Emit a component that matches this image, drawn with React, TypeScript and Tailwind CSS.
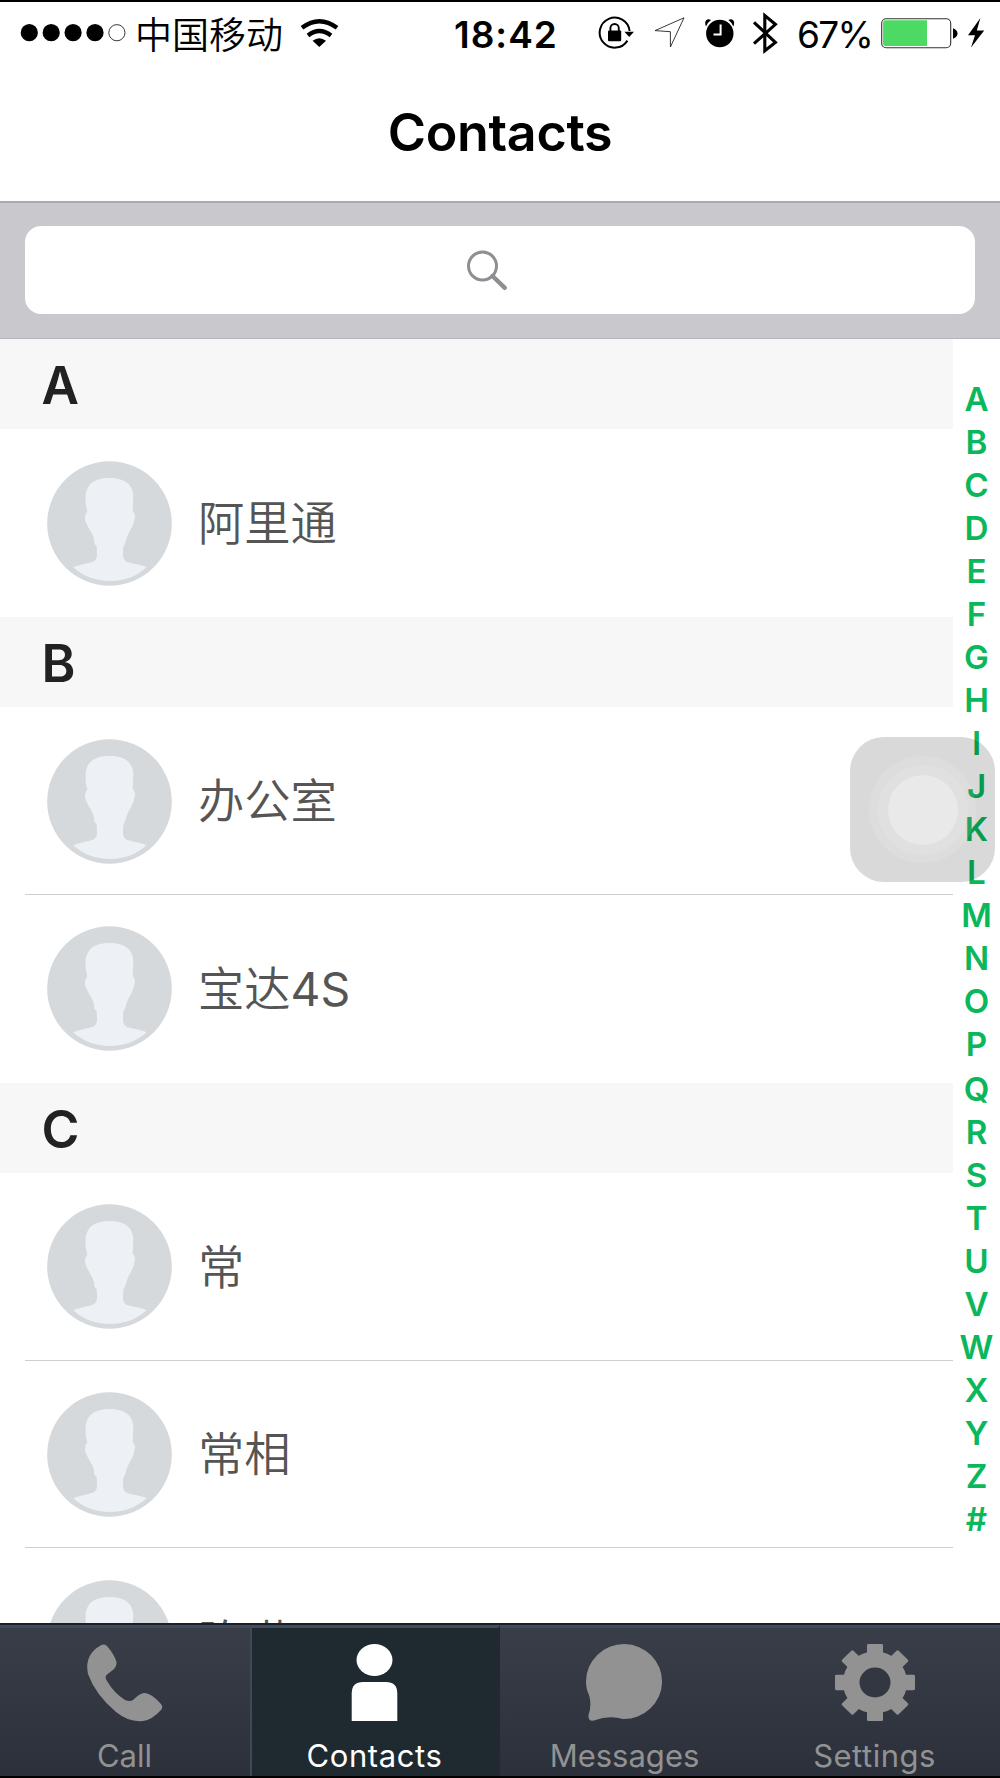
import React from "react";

const sections = [
  { letter: "A", people: [{ name: "阿里通" }] },
  { letter: "B", people: [{ name: "办公室" }, { name: "宝达", suffix: "4S" }] },
  { letter: "C", people: [{ name: "常" }, { name: "常相" }, { name: "陈琳" }] },
];

const indexLetters = "ABCDEFGHIJKLMNOPQRSTUVWXYZ#".split("");

function StatusBar() {
  return (
    <div className="flex h-[62px] shrink-0 items-center text-[36px] leading-none">
      <svg className="ml-[20px] h-[20px] w-[106px] shrink-0" viewBox="0 0 106 20">
        <circle cx="9.3" cy="9.7" r="8.6" />
        <circle cx="31.2" cy="9.7" r="8.6" />
        <circle cx="53.1" cy="9.7" r="8.6" />
        <circle cx="75" cy="9.7" r="8.6" />
        <circle cx="96.9" cy="9.7" r="8.1" fill="none" stroke="#222" strokeWidth="0.9" />
      </svg>
      <span className="ml-[9px] w-[148px] shrink-0 whitespace-nowrap pt-[4px] text-[37px] font-[350]">中国移动</span>
      <svg className="ml-[17px] h-[30px] w-[40px] shrink-0" viewBox="300 17 40 30" fill="none" stroke="#000" strokeWidth="4.4">
        <path d="M302 26.8Q319.3 13.6 337 26.8" />
        <path d="M308 34.4Q319.3 25.6 331 34.4" />
        <path d="M312.6 39.8Q319.3 34.8 326 39.8L319.3 46Z" fill="#000" stroke="none" />
      </svg>
      <span className="ml-[114px] w-[108px] shrink-0 whitespace-nowrap pt-[2px] text-[37px] font-semibold tracking-[1px]">18:42</span>
      <svg className="ml-[36px] h-[48px] w-[182px] shrink-0" viewBox="598 9 182 48">
        <path d="M627.4 40.6A15 15 0 1 1 629.6 31" fill="none" stroke="#000" strokeWidth="2" />
        <path d="M624.4 31.8H634L629.2 37Z" />
        <rect x="608" y="30.6" width="13.2" height="10.6" rx="1" />
        <path d="M610.4 31v-2.8a4.2 4.2 0 0 1 8.4 0V31" fill="none" stroke="#000" strokeWidth="1.9" />
        <path d="M684 17.8L655 30.6L670.4 31.7V47Z" fill="none" stroke="#222" strokeWidth="0.9" />
        <circle cx="719.8" cy="33.5" r="13.7" />
        <path d="M706 26.5Q704.2 22 706.4 20Q708.5 18.6 711 20Q707.5 22.5 706 26.5ZM733.3 26.5Q735.2 22 733 20Q731 18.6 728.4 20Q731.8 22.5 733.3 26.5Z" />
        <path d="M720.6 24.5V34.5H713.5" fill="none" stroke="#fff" strokeWidth="2" />
        <path d="M754 22.3L775.4 42.4L764.8 50.8V15.6L775.4 24.4L754 43.7" fill="none" stroke="#000" strokeWidth="3.1" />
      </svg>
      <span className="ml-[17px] w-[76px] shrink-0 whitespace-nowrap pt-[2px] text-[37px] tracking-[-1.700px]">67%</span>
      <svg className="ml-[8px] h-[32px] w-[104px] shrink-0" viewBox="881 17 104 32">
        <rect x="881.7" y="18.7" width="69" height="29" rx="4.5" fill="#fff" stroke="#333" strokeWidth="1.1" />
        <path d="M927 20.3v25.8H885.5a2.4 2.4 0 0 1-2.4-2.4V22.7a2.4 2.4 0 0 1 2.4-2.4Z" fill="#4cd964" />
        <path d="M953 28.3Q957.5 30 957.5 33.5T953 38.8Z" />
        <path d="M980.4 18L968 35.2H975L971 47.5L984.2 30.4H976.8Z" />
      </svg>
    </div>
  );
}

function Avatar() {
  return (
    <svg className="h-[125px] w-[125px] shrink-0" viewBox="0 0 375 375">
      <circle cx="187.5" cy="187.5" r="187" fill="#d5d9dc" />
      <path
        d="M188 51C232 51 258 69 259 106L257 150C265 158 265 167 263 172Q261 186 255 198Q241 223 238 235Q236 248 229 257L228 280Q228 298 240 303C262 309 286 312 299 319Q253 360 190 360Q123 360 79 319C95 311 115 309 138 302Q150 298 150 280L149 255Q144 252 142 247Q142 232 136 220Q122 198 115 180Q111 160 121 152L116 130L116 100C121 67 145 51 188 51Z"
        fill="#edf1f5"
      />
    </svg>
  );
}

function CallIcon() {
  return (
    <svg className="h-[78px] w-[78px]" viewBox="0 0 78 78" fill="#929292">
      <path d="M14.500 1.500Q18 -.5 21 2Q28 10 30.500 18Q31 22 28 25L20.500 31Q18.500 33 21 37Q28 49 39 56Q44 58 47 56Q55 48 59 49Q66 50 74 59Q78 62.500 75 66Q66 76 57 77Q43 78.500 30 68Q9 50 2 30Q-2 11 14.500 1.500Z" />
    </svg>
  );
}

function PersonIcon() {
  return (
    <svg className="h-[78px] w-[78px]" viewBox="0 0 78 78" fill="#fff">
      <ellipse cx="38.500" cy="16" rx="18" ry="16" />
      <path d="M15.700 77V49Q16 38 27 38H50Q61 38 61.300 49V77Z" />
    </svg>
  );
}

function MessageIcon() {
  return (
    <svg className="h-[78px] w-[78px]" viewBox="0 0 78 78" fill="#929292">
      <path d="M38.500 0A38.300 37.500 0 1 1 37 75Q23 71 8 76.500Q2 78 2.500 71Q6 61 3 51Q0 45 0 37.500A38.300 37.500 0 0 1 38.500 0Z" />
    </svg>
  );
}

function SettingsIcon() {
  return (
    <svg className="h-[78px] w-[80px]" viewBox="0 0 80 78" fill="#929292">
      <g transform="translate(40 38.500) scale(1 .965)">
        {[0, 45, 90, 135].map((angle) => (
          <rect key={angle} x="-8" y="-40" width="16" height="80" rx="1.500" transform={`rotate(${angle})`} />
        ))}
        <circle r="23.500" fill="none" stroke="#929292" strokeWidth="17" />
        <circle r="15.500" fill="#323742" />
      </g>
    </svg>
  );
}

const tabs = [
  { label: "Call", icon: <CallIcon />, spacing: "tracking-[0px]" },
  { label: "Contacts", icon: <PersonIcon />, active: true, spacing: "tracking-[0.6px]" },
  { label: "Messages", icon: <MessageIcon />, spacing: "tracking-[0px]" },
  { label: "Settings", icon: <SettingsIcon />, spacing: "tracking-[0.5px]" },
];

export default function App() {
  return (
    <div className="relative flex h-[1778px] w-[1000px] flex-col overflow-hidden border-y-2 border-black bg-white font-['Inter','Noto_Sans_CJK_SC',sans-serif] text-black">
      <StatusBar />
      <header className="flex h-[139px] shrink-0 items-center justify-center border-b-2 border-[#a8abab] pt-[1px]">
        <h1 className="text-[52px] font-semibold leading-none tracking-[-0.3px]">Contacts</h1>
      </header>

      <div className="h-[136px] shrink-0 border-b border-[#b4b4ba] bg-[#c9c8cd] px-[25px] pt-[23px]">
        <div className="flex h-[88px] items-center justify-center rounded-[16px] bg-white">
          <svg className="mr-[26px] h-[42px] w-[42px]" viewBox="0 0 42 42" fill="none" stroke="#8e8e93">
            <circle cx="16.500" cy="17" r="14" strokeWidth="3" />
            <path d="M26.500 27L38.800 38.800" strokeWidth="4.400" strokeLinecap="round" />
          </svg>
        </div>
      </div>

      <main className="flex min-h-0 flex-1 overflow-hidden">
        <div className="w-[953px] shrink-0">
          {sections.map((section) => (
            <section key={section.letter}>
              <h2 className="flex h-[90.300px] items-center bg-[#f7f7f7] pl-[41.500px] pt-[3px] text-[51.500px] font-semibold leading-none text-[#222]">
                {section.letter}
              </h2>
              <ul className="pl-[25px]">
                {section.people.map((person) => (
                  <li
                    key={person.name}
                    className="flex h-[187.700px] items-center border-b border-[#cfcfd3] pl-[22px] pt-px last:border-transparent"
                  >
                    <Avatar />
                    <span className="ml-[26px] whitespace-nowrap text-[46.300px] font-[350] leading-none text-[#555]">
                      {person.name}
                      {person.suffix && <span className="font-normal">{person.suffix}</span>}
                    </span>
                  </li>
                ))}
              </ul>
            </section>
          ))}
        </div>
        <nav className="flex flex-1 flex-col items-center pt-[39px]">
          {indexLetters.map((letter) => (
            <span
              key={letter}
              className={
                letter === "Q"
                  ? "mt-[2px] h-[43.020px] shrink-0 text-[33.200px] font-semibold leading-[43.020px] text-[#0bb75b]"
                  : "h-[43.020px] shrink-0 text-[33.200px] font-semibold leading-[43.020px] text-[#0bb75b]"
              }
            >
              {letter}
            </span>
          ))}
        </nav>
      </main>

      <footer className="flex h-[153px] shrink-0 border-t-2 border-[#1c1f2a] bg-linear-to-b from-[#3a3e49] to-[#2b303b]">
        {tabs.map((tab) => (
          <div
            key={tab.label}
            className={
              tab.active
                ? "flex w-[250px] flex-col items-center border-l-2 border-r-2 border-t-3 border-l-[#3b4959] border-r-[#232833] border-t-[#414c5a] bg-[#1e2930] pr-px pt-[16px] text-white"
                : "flex w-[250px] flex-col items-center border-t-3 border-[#414c5a] pr-px pt-[16px] text-[#929292]"
            }
          >
            {tab.icon}
            <span className={`mt-[14.500px] text-[31px] leading-[38px] ${tab.spacing}`}>{tab.label}</span>
          </div>
        ))}
      </footer>

      <div className="absolute left-[850px] top-[735px] flex h-[145px] w-[145px] items-center justify-center rounded-[34px] bg-black/15">
        <div className="flex h-[107px] w-[107px] items-center justify-center rounded-full bg-white/10">
          <div className="flex h-[90px] w-[90px] items-center justify-center rounded-full bg-white/10">
            <div className="h-[70px] w-[70px] rounded-full bg-white/30" />
          </div>
        </div>
      </div>
    </div>
  );
}
